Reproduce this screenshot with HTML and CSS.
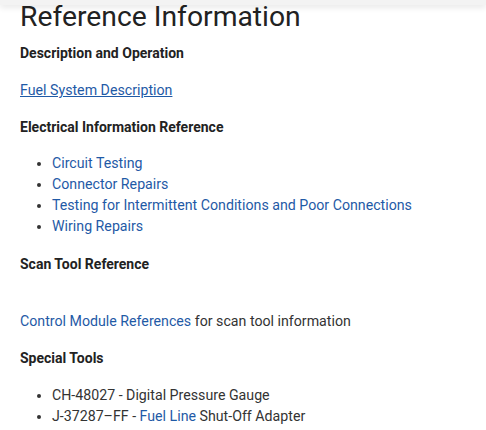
FILE: index.html
```html
<!DOCTYPE html>
<html>
<head>
<meta charset="utf-8">
<link rel="stylesheet" href="styles.css">
</head>
<body>
<div class="topbar"></div>
<main class="content">
  <h1 class="title">Reference Information</h1>
  <h2 class="section">Description and Operation</h2>
  <p class="para"><a class="link underline" href="#">Fuel System Description</a></p>
  <h2 class="section">Electrical Information Reference</h2>
  <ul class="list">
    <li><a class="link" href="#">Circuit Testing</a></li>
    <li><a class="link" href="#">Connector Repairs</a></li>
    <li><a class="link" href="#">Testing for Intermittent Conditions and Poor Connections</a></li>
    <li><a class="link" href="#">Wiring Repairs</a></li>
  </ul>
  <h2 class="section">Scan Tool Reference</h2>
  <p class="para spaced"><a class="link" href="#">Control Module References</a> for scan tool information</p>
  <h2 class="section">Special Tools</h2>
  <ul class="list tools">
    <li>CH-48027 - Digital Pressure Gauge</li>
    <li>J-37287&#8211;FF - <a class="link" href="#">Fuel Line</a> Shut-Off Adapter</li>
  </ul>
</main>
</body>
</html>
```
FILE: styles.css
```css
html, body {
  margin: 0;
  padding: 0;
  background: #ffffff;
}
body {
  font-family: Roboto, "Liberation Sans", sans-serif;
  color: #333333;
  font-size: 14.2px;
  line-height: 21px;
  overflow: hidden;
}
.topbar {
  position: absolute;
  top: 0;
  left: 0;
  right: 0;
  height: 5px;
  background: #f3f3f3;
  box-shadow: 0 2px 6px rgba(0, 0, 0, 0.12);
}
.content {
  padding: 0 20px;
}
.title {
  margin: 0;
  padding-bottom: 3px;
  font-size: 28.3px;
  font-weight: 400;
  line-height: 34px;
  color: #222222;
}
.section {
  margin: 6px 0 0 0;
  font-size: 14px;
  font-weight: 700;
  line-height: 21px;
  color: #222222;
}
.para {
  margin: 16px 0 16px 0;
}
.para.spaced {
  margin-top: 36px;
}
.link {
  color: #1f5aa6;
  text-decoration: none;
}
.link.underline {
  text-decoration: underline;
}
.list {
  margin: 15px 0 17px 0;
  padding-left: 32px;
}
.list.tools {
  margin-top: 16px;
}
.list li {
  line-height: 21px;
}
```
